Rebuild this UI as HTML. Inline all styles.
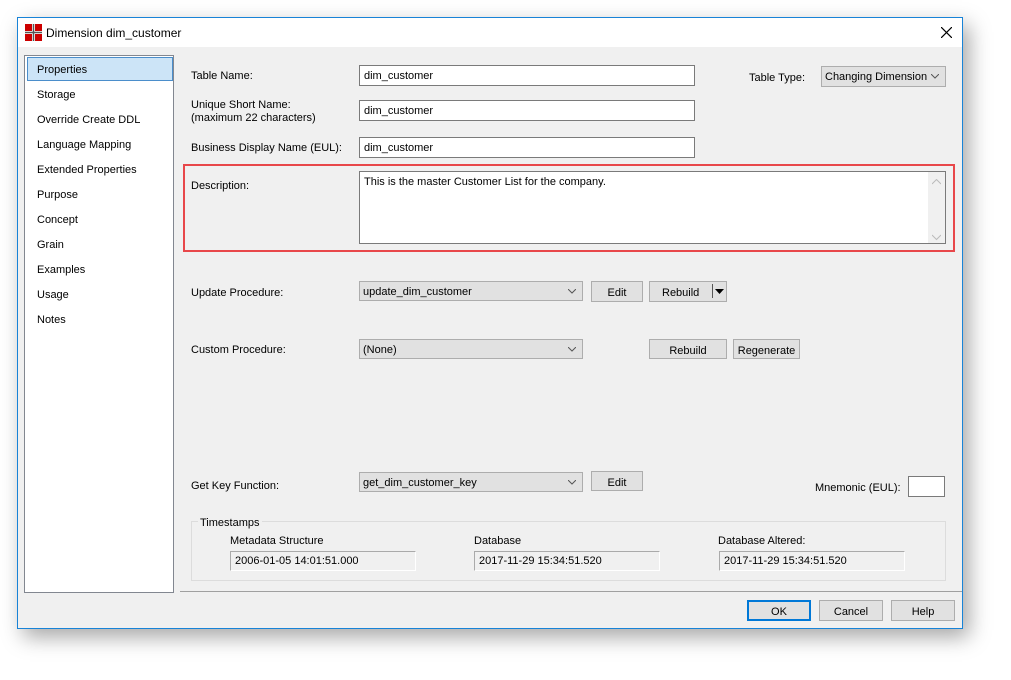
<!DOCTYPE html>
<html><head><style>
body{margin:0;width:1011px;height:680px;background:#fff;position:relative;overflow:hidden;font-family:"Liberation Sans",sans-serif;font-size:11px;color:#000}
div{box-sizing:border-box}
.a{position:absolute}
.win{left:17px;top:17px;width:946px;height:612px;border:1px solid #1883d7;background:#f0f0f0;box-shadow:6px 8px 20px rgba(0,0,0,.35)}
.title{left:18px;top:18px;width:944px;height:29px;background:#fff}
.inp{background:#fff;border:1px solid #7a7a7a;padding:4px 0 0 4px;white-space:nowrap}
.cmb{background:#e1e1e1;border:1px solid #adadad;padding:4px 0 0 3px;white-space:nowrap}
.cmb svg{position:absolute;right:6px;top:7px}
.btn{background:#e1e1e1;border:1px solid #adadad;text-align:center;padding-top:5px}
.ro{background:#f0f0f0;border:1px solid #aaa;border-right-color:#fff;border-bottom-color:#fff;padding:3px 0 0 4px}
.li{left:37px}
</style></head><body>
<div class="a win"></div>
<div class="a title"></div>
<svg class="a" style="left:25px;top:24px" width="17" height="17"><rect x="0" y="0" width="7" height="7" fill="#c00"/><rect x="10" y="0" width="7" height="7" fill="#c00"/><rect x="0" y="10" width="7" height="7" fill="#c00"/><rect x="10" y="10" width="7" height="7" fill="#c00"/><path d="M8.5 0V17M0 8.5H17" stroke="#555" stroke-width="1.5"/></svg>
<div class="a" style="left:46px;top:26px;font-size:12px">Dimension dim_customer</div>
<svg class="a" style="left:941px;top:27px" width="11" height="11"><path d="M0 0L11 11M11 0L0 11" stroke="#000" stroke-width="1.2"/></svg>

<div class="a" style="left:24px;top:55px;width:150px;height:538px;background:#fff;border:1px solid #828790"></div>
<div class="a" style="left:27px;top:57px;width:146px;height:24px;background:#cce4f7;border:1px solid #4b8ecb"></div>
<div class="a li" style="top:64px">Properties</div>
<div class="a li" style="top:89px">Storage</div>
<div class="a li" style="top:114px">Override Create DDL</div>
<div class="a li" style="top:139px">Language Mapping</div>
<div class="a li" style="top:164px">Extended Properties</div>
<div class="a li" style="top:189px">Purpose</div>
<div class="a li" style="top:214px">Concept</div>
<div class="a li" style="top:239px">Grain</div>
<div class="a li" style="top:264px">Examples</div>
<div class="a li" style="top:289px">Usage</div>
<div class="a li" style="top:314px">Notes</div>

<div class="a" style="left:191px;top:70px">Table Name:</div>
<div class="a inp" style="left:359px;top:65px;width:336px;height:21px">dim_customer</div>
<div class="a" style="left:191px;top:99px;line-height:13px">Unique Short Name:<br>(maximum 22 characters)</div>
<div class="a inp" style="left:359px;top:100px;width:336px;height:21px">dim_customer</div>
<div class="a" style="left:191px;top:142px">Business Display Name (EUL):</div>
<div class="a inp" style="left:359px;top:137px;width:336px;height:21px">dim_customer</div>
<div class="a" style="left:749px;top:72px">Table Type:</div>
<div class="a cmb" style="left:821px;top:66px;width:125px;height:21px">Changing Dimension<svg width="8" height="5"><path d="M0 0L4 4L8 0" stroke="#555" fill="none"/></svg></div>

<div class="a" style="left:183px;top:164px;width:772px;height:88px;border:2px solid #e8474a"></div>
<div class="a" style="left:191px;top:180px">Description:</div>
<div class="a inp" style="left:359px;top:171px;width:587px;height:73px">This is the master Customer List for the company.</div>
<div class="a" style="left:928px;top:172px;width:17px;height:71px;background:#f0f0f0"></div>
<svg class="a" style="left:932px;top:179px" width="9" height="62"><path d="M0 5L4.5 0.5L9 5M0 56L4.5 60.5L9 56" stroke="#bbb" fill="none"/></svg>

<div class="a" style="left:191px;top:287px">Update Procedure:</div>
<div class="a cmb" style="left:359px;top:281px;width:224px;height:20px">update_dim_customer<svg width="8" height="5"><path d="M0 0L4 4L8 0" stroke="#555" fill="none"/></svg></div>
<div class="a btn" style="left:591px;top:281px;width:52px;height:21px">Edit</div>
<div class="a btn" style="left:649px;top:281px;width:78px;height:21px;text-align:left;padding-left:12px">Rebuild</div>
<div class="a" style="left:712px;top:284px;width:1px;height:14px;background:#555"></div>
<svg class="a" style="left:715px;top:289px" width="9" height="5"><path d="M0 0H9L4.5 5Z" fill="#000"/></svg>

<div class="a" style="left:191px;top:344px">Custom Procedure:</div>
<div class="a cmb" style="left:359px;top:339px;width:224px;height:20px">(None)<svg width="8" height="5"><path d="M0 0L4 4L8 0" stroke="#555" fill="none"/></svg></div>
<div class="a btn" style="left:649px;top:339px;width:78px;height:20px">Rebuild</div>
<div class="a btn" style="left:733px;top:339px;width:67px;height:20px">Regenerate</div>

<div class="a" style="left:191px;top:480px">Get Key Function:</div>
<div class="a cmb" style="left:359px;top:472px;width:224px;height:20px">get_dim_customer_key<svg width="8" height="5"><path d="M0 0L4 4L8 0" stroke="#555" fill="none"/></svg></div>
<div class="a btn" style="left:591px;top:471px;width:52px;height:20px">Edit</div>
<div class="a" style="left:815px;top:482px">Mnemonic (EUL):</div>
<div class="a inp" style="left:908px;top:476px;width:37px;height:21px"></div>

<div class="a" style="left:191px;top:521px;width:755px;height:60px;border:1px solid #dcdcdc"></div>
<div class="a" style="left:198px;top:517px;background:#f0f0f0;padding:0 2px">Timestamps</div>
<div class="a" style="left:230px;top:535px">Metadata Structure</div>
<div class="a ro" style="left:230px;top:551px;width:186px;height:20px">2006-01-05 14:01:51.000</div>
<div class="a" style="left:474px;top:535px">Database</div>
<div class="a ro" style="left:474px;top:551px;width:186px;height:20px">2017-11-29 15:34:51.520</div>
<div class="a" style="left:718px;top:535px">Database Altered:</div>
<div class="a ro" style="left:719px;top:551px;width:186px;height:20px">2017-11-29 15:34:51.520</div>

<div class="a" style="left:180px;top:591px;width:782px;height:1px;background:#a0a0a0"></div>
<div class="a btn" style="left:747px;top:600px;width:64px;height:21px;border:2px solid #0078d7;padding-top:4px">OK</div>
<div class="a btn" style="left:819px;top:600px;width:64px;height:21px">Cancel</div>
<div class="a btn" style="left:891px;top:600px;width:64px;height:21px">Help</div>
</body></html>
